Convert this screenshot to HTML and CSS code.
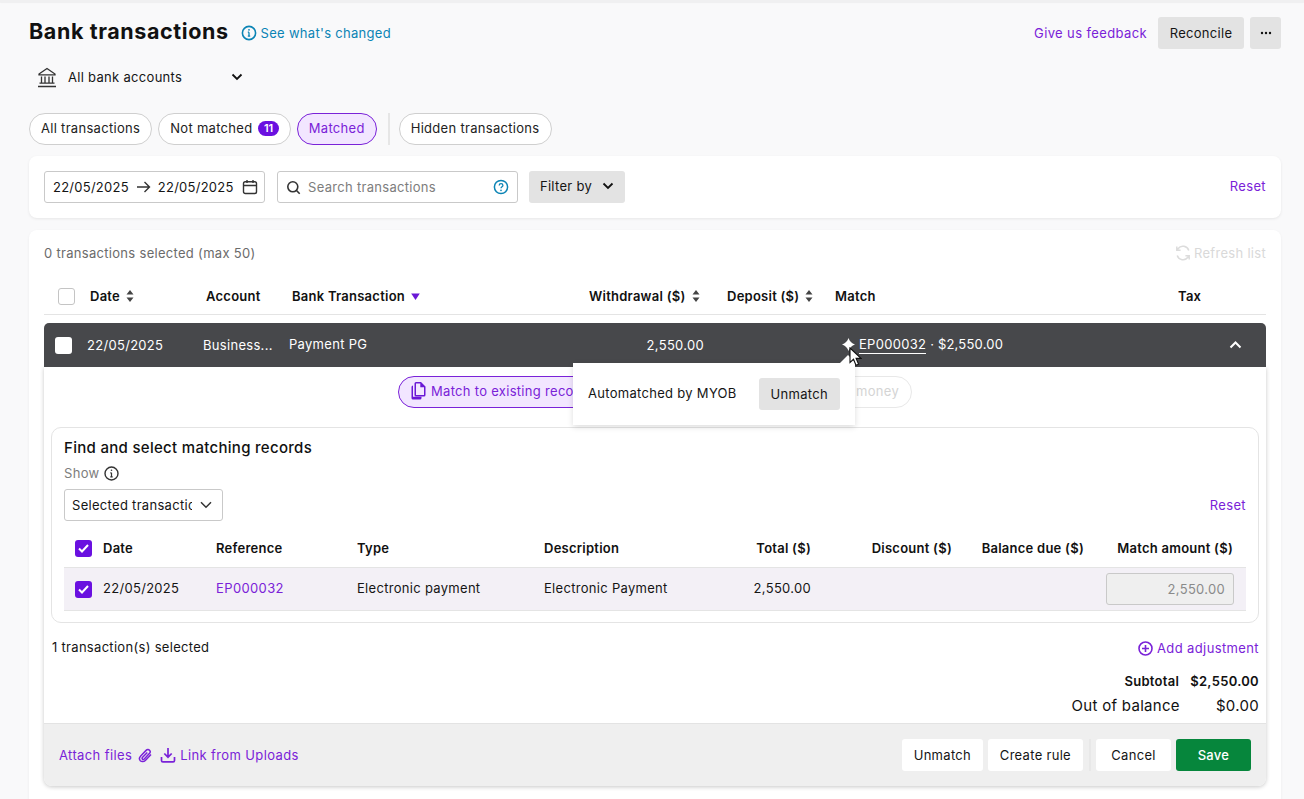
FILE: index.html
```html
<!DOCTYPE html>
<html lang="en">
<head>
<meta charset="utf-8">
<title>Bank transactions</title>
<link rel="stylesheet" href="styles.css">
</head>
<body>
<div class="topline"></div>
<main class="page">
  <header class="head">
    <div class="head-left">
      <h1>Bank transactions</h1>
      <a class="whats-new">
        <svg width="16" height="16" viewBox="0 0 16 16" fill="none" stroke="#0b84b5" stroke-width="1.6"><circle cx="8" cy="8" r="6.6"/><path d="M8 7.2v4M6.8 11.2h2.4M6.8 7.2H8" stroke-width="1.3"/><circle cx="8" cy="4.8" r=".9" fill="#0b84b5" stroke="none"/></svg>
        See what's changed
      </a>
    </div>
    <div class="head-right">
      <a class="link feedback">Give us feedback</a>
      <button class="btn grey reconcile">Reconcile</button>
      <button class="btn grey more">
        <svg width="12" height="4" viewBox="0 0 12 4" fill="#111"><circle cx="2" cy="2" r="1.2"/><circle cx="6" cy="2" r="1.2"/><circle cx="10" cy="2" r="1.2"/></svg>
      </button>
    </div>
  </header>

  <div class="account">
    <svg class="bank" width="22" height="22" viewBox="0 0 22 22" fill="none" stroke="#333" stroke-width="1.3"><path d="M3 8 11 2.5 19 8v.8H3z"/><path d="M5.5 10.5v6M9 10.5v6M13 10.5v6M16.5 10.5v6M3.5 17.2h15"/><path d="M2 20.5h18" stroke-width="1.5"/></svg>
    <span class="account-name">All bank accounts</span>
    <svg class="chev" width="12" height="8" viewBox="0 0 12 8" fill="none" stroke="#111" stroke-width="1.8"><path d="M1.5 1.5 6 6l4.5-4.5"/></svg>
  </div>

  <nav class="tabs">
    <a class="pill">All transactions</a>
    <a class="pill">Not matched <span class="badge">11</span></a>
    <a class="pill active">Matched</a>
    <span class="tab-sep"></span>
    <a class="pill">Hidden transactions</a>
  </nav>

  <section class="filters">
    <div class="field date">
      <span>22/05/2025</span>
      <svg width="15" height="12" viewBox="0 0 15 12" fill="none" stroke="#333" stroke-width="1.4"><path d="M1 6h12.5M8.5 1l5 5-5 5"/></svg>
      <span>22/05/2025</span>
      <svg class="cal" width="16" height="16" viewBox="0 0 16 16" fill="none" stroke="#333" stroke-width="1.4"><rect x="1.5" y="2.7" width="13" height="11.8" rx="1.8"/><path d="M1.5 6.5h13M5 1v3M11 1v3"/></svg>
    </div>
    <div class="field search">
      <svg width="15" height="15" viewBox="0 0 15 15" fill="none" stroke="#333" stroke-width="1.6"><circle cx="6.8" cy="6.8" r="5"/><path d="m10.5 10.5 3.2 3.2"/></svg>
      <span class="placeholder">Search transactions</span>
      <svg class="help" width="16" height="16" viewBox="0 0 16 16" fill="none" stroke="#0b84b5" stroke-width="1.5"><circle cx="8" cy="8" r="6.6"/><path d="M6.2 6.4c0-2.300 3.700-2.300 3.700 0 0 1.400-1.900 1.400-1.900 2.900" stroke-width="1.3"/><circle cx="8" cy="11.400" r=".8" fill="#0b84b5" stroke="none"/></svg>
    </div>
    <button class="btn grey filter-btn">Filter by
      <svg width="12" height="8" viewBox="0 0 12 8" fill="none" stroke="#111" stroke-width="1.8"><path d="M1.500 1.500 6 6l4.500-4.500"/></svg>
    </button>
    <a class="link reset-top">Reset</a>
  </section>

  <section class="list">
    <div class="list-top">
      <span class="muted">0 transactions selected (max 50)</span>
      <span class="refresh">
        <svg width="16" height="16" viewBox="0 0 16 16" fill="none" stroke="#dcdcdc" stroke-width="1.5"><path d="M13.800 5.500A6.200 6.200 0 0 0 3 3.700L1.800 5.300M2.200 10.500A6.200 6.200 0 0 0 13 12.300l1.200-1.600M1.800 1.500v3.800h3.800M14.200 14.500v-3.800h-3.800"/></svg>
        Refresh list
      </span>
    </div>

    <div class="cols">
      <span class="check"></span>
      <span class="th">Date <svg width="8" height="12" viewBox="0 0 8 12" fill="#444"><path d="M4 0l3.500 4.500h-7zM4 12 .5 7.500h7z"/></svg></span>
      <span class="th">Account</span>
      <span class="th">Bank Transaction <svg width="9" height="7" viewBox="0 0 9 7" fill="#6a18d6"><path d="M4.500 7 .2.500h8.600z"/></svg></span>
      <span class="th">Withdrawal ($) <svg width="8" height="12" viewBox="0 0 8 12" fill="#444"><path d="M4 0l3.500 4.500h-7zM4 12 .5 7.500h7z"/></svg></span>
      <span class="th">Deposit ($) <svg width="8" height="12" viewBox="0 0 8 12" fill="#444"><path d="M4 0l3.500 4.500h-7zM4 12 .5 7.500h7z"/></svg></span>
      <span class="th">Match</span>
      <span class="th">Tax</span>
    </div>

    <div class="txn">
      <span class="check white"></span>
      <span>22/05/2025</span>
      <span>Business...</span>
      <span class="lift">Payment PG</span>
      <span class="amount">2,550.00</span>
      <span class="txn-match lift">
        <svg width="13" height="13" viewBox="0 0 13 13" fill="#fff"><path d="M6.500 0C7.500 3 9.800 5.400 13 6.500 9.800 7.600 7.500 10 6.500 13 5.500 10 3.200 7.600 0 6.500 3.200 5.400 5.500 3 6.500 0z"/></svg>
        <span class="match-text"><a class="ep">EP000032</a> · $2,550.00</span>
      </span>
      <svg class="collapse" width="13" height="8" viewBox="0 0 13 8" fill="none" stroke="#fff" stroke-width="2"><path d="M1.500 6.500l5-5 5 5"/></svg>
    </div>

    <div class="detail">
      <div class="modes">
        <a class="pill active mode">
          <svg width="16" height="18" viewBox="0 0 16 18" fill="#6a18d6"><path d="M6 0h5l4.500 4.500V13a1.500 1.500 0 0 1-1.500 1.500H6A1.500 1.500 0 0 1 4.500 13V1.500A1.500 1.500 0 0 1 6 0zm4.300 1.500H6V13h8V5.200h-3.700z"/><path d="M3 3.500v11.200h8.500V16a1.500 1.500 0 0 1-1.500 1.500H3A1.500 1.500 0 0 1 1.500 16V5A1.500 1.500 0 0 1 3 3.500z"/></svg>
          Match to existing records
        </a>
        <a class="pill faded">Transfer money</a>
      </div>

      <div class="panel">
        <h2>Find and select matching records</h2>
        <div class="show">Show
          <svg width="15" height="15" viewBox="0 0 15 15" fill="none" stroke="#333" stroke-width="1.400"><circle cx="7.500" cy="7.500" r="6.500"/><path d="M7.500 6.800v4M6.300 10.800h2.400M6.300 6.800h1.200" stroke-width="1.200"/><circle cx="7.500" cy="4.300" r=".8" fill="#333" stroke="none"/></svg>
        </div>
        <div class="select-row">
          <div class="select">
            <span class="select-text">Selected transactions</span>
            <svg width="12" height="8" viewBox="0 0 12 8" fill="none" stroke="#333" stroke-width="1.500"><path d="M1 1.200 6 6.200l5-5"/></svg>
          </div>
          <a class="link">Reset</a>
        </div>
        <div class="m-row m-head">
          <span class="tick"><svg width="11" height="9" viewBox="0 0 11 9" fill="none" stroke="#fff" stroke-width="2"><path d="M1 4.500 4 7.500 10 1"/></svg></span>
          <span>Date</span><span>Reference</span><span>Type</span><span>Description</span>
          <span class="num">Total ($)</span><span class="num">Discount ($)</span><span class="num">Balance due ($)</span><span class="num">Match amount ($)</span>
        </div>
        <div class="m-row m-body">
          <span class="tick"><svg width="11" height="9" viewBox="0 0 11 9" fill="none" stroke="#fff" stroke-width="2"><path d="M1 4.500 4 7.500 10 1"/></svg></span>
          <span>22/05/2025</span><a class="link">EP000032</a><span>Electronic payment</span><span>Electronic Payment</span>
          <span class="num">2,550.00</span><span></span><span></span>
          <span class="amount-input">2,550.00</span>
        </div>
      </div>

      <div class="summary">
        <div class="sum-top">
          <span>1 transaction(s) selected</span>
          <a class="link add">
            <svg width="15" height="15" viewBox="0 0 15 15" fill="none" stroke="#7a22d8" stroke-width="1.600"><circle cx="7.500" cy="7.500" r="6.500"/><path d="M7.500 4v7M4 7.500h7"/></svg>
            Add adjustment
          </a>
        </div>
        <div class="subtotal"><span>Subtotal</span><span>$2,550.00</span></div>
        <div class="balance"><span>Out of balance</span><span>$0.00</span></div>
      </div>

      <footer class="actions">
        <a class="link foot-link">Attach files
          <svg width="15" height="15" viewBox="0 0 15 15" fill="none" stroke="#7a22d8" stroke-width="1.500"><path d="M13 6.500 7.300 12.400c-1.500 1.500-3.700 1.600-5 .3-1.200-1.300-1-3.300.4-4.800l5.400-5.500c1-1 2.500-1.100 3.400-.2.900.9.800 2.400-.2 3.400L6.300 11c-.5.500-1.300.6-1.800.1-.5-.5-.4-1.300.1-1.800l4.700-4.800"/></svg>
        </a>
        <a class="link foot-link upload">
          <svg width="16" height="16" viewBox="0 0 16 16" fill="none" stroke="#7a22d8" stroke-width="1.700"><path d="M8 1v9M4.300 6.500 8 10.200l3.700-3.700"/><path d="M1.500 10v3.500c0 .8.600 1.400 1.400 1.400h10.200c.8 0 1.400-.6 1.400-1.400V10"/></svg>
          Link from Uploads
        </a>
        <div class="foot-btns">
          <button class="btn plain unmatch">Unmatch</button>
          <button class="btn plain">Create rule</button>
          <span class="foot-sep"></span>
          <button class="btn plain cancel">Cancel</button>
          <button class="btn save">Save</button>
        </div>
      </footer>
    </div>
  </section>
</main>

<div class="popover">
  <span>Automatched by MYOB</span>
  <button class="btn grey">Unmatch</button>
</div>
<svg class="cursor" width="13" height="20" viewBox="0 0 13 20"><path d="M1 1v14.500l3.500-3.200 2.500 6 2.600-1.100-2.500-5.800h4.900z" fill="#fff" stroke="#111" stroke-width="1.100"/></svg>
</body>
</html>
```
FILE: styles.css
```css
* { box-sizing: border-box; }
html, body { margin: 0; height: 799px; overflow: hidden; }
body {
  position: relative;
  background: #f9f9fa;
  color: #151515;
  font: 13px/18px Inter, "Liberation Sans", sans-serif;
  letter-spacing: .3px;
}
a { text-decoration: none; }
button { font: inherit; letter-spacing: inherit; color: inherit; border: 0; cursor: pointer; }
svg { display: block; flex: none; }
.topline { height: 2px; background: #f0f0f1; box-shadow: 0 1px 1px rgba(0,0,0,.04); }
.page { padding: 15px 23px 0 29px; }

.head { display: flex; justify-content: space-between; align-items: center; height: 32px; }
.head-left { display: flex; align-items: center; gap: 12px; }
h1 { margin: -4px 0 0; font-size: 21.5px; line-height: 28px; font-weight: 700; letter-spacing: .6px; color: #111; white-space: nowrap; }
.whats-new { display: flex; align-items: center; gap: 4px; color: #0b84b5; white-space: nowrap; }
.head-right { display: flex; align-items: center; gap: 6px; }
.feedback { margin-right: 5px; }
.link { color: #7a22d8; letter-spacing: .38px; }
.btn { height: 32px; padding: 0 12px 1px; border-radius: 3px; display: inline-flex; align-items: center; justify-content: center; }
.grey { background: #e3e3e3; }
.reconcile { width: 86px; }
.more { width: 31px; padding: 0; }

.account { display: flex; align-items: center; height: 30px; margin: 13px 0 21px 7px; }
.account-name { margin-left: 10px; width: 163px; }

.tabs { display: flex; align-items: center; gap: 6px; height: 32px; margin-bottom: 11px; }
.pill { height: 32px; padding: 0 11px 2px; display: inline-flex; align-items: center; gap: 6px; border: 1px solid #cfcfcf; border-radius: 16px; background: #fff; color: #222; white-space: nowrap; }
.pill.active { background: #f2e6ff; border-color: #7a22d8; color: #7a22d8; }
.badge { background: #6a10e0; color: #fff; font-size: 11px; font-weight: 600; line-height: 14px; height: 15px; padding: 0 5.5px; border-radius: 8px; letter-spacing: 0; }
.tab-sep { width: 2px; height: 32px; background: #e6e6e6; margin: 0 3px 0 5px; }

.filters { display: flex; align-items: center; height: 62px; padding: 0 15px; background: #fff; border-radius: 8px; box-shadow: 0 1px 3px rgba(0,0,0,.08); }
.field { height: 32px; display: flex; align-items: center; background: #fff; border: 1px solid #c9c9c9; border-radius: 3px; }
.date { width: 221px; padding: 0 6px 0 8px; gap: 7px; letter-spacing: .25px; }
.cal { margin-left: auto; }
.search { width: 241px; margin-left: 12px; padding: 0 8px; gap: 7px; }
.placeholder { color: #7d7d7d; flex: 1; }
.filter-btn { width: 96px; margin-left: 11px; gap: 10px; padding: 0 0 2px; }
.reset-top { margin: 0 0 2px auto; }

.list { margin-top: 12px; padding: 0 15px; height: 600px; background: #fff; border-radius: 8px 8px 0 0; box-shadow: 0 1px 3px rgba(0,0,0,.06); }
.list-top { display: flex; justify-content: space-between; align-items: center; padding-bottom: 2px; height: 48px; }
.muted { color: #6b6b6b; }
.refresh { display: flex; align-items: center; gap: 3px; color: #d9d9d9; }

.cols { display: grid; align-items: center; grid-template-columns: 32px 116px 86px 297px 138px 108px 343px 1fr; height: 37px; padding-left: 14px; border-bottom: 1px solid #e4e4e4; }
.th { display: flex; align-items: center; gap: 6px; font-weight: 600; color: #111; letter-spacing: .25px; }
.check { width: 17px; height: 17px; border: 1px solid #c4c4c4; border-radius: 3px; background: #fff; }
.txn { position: relative; display: grid; align-items: center; grid-template-columns: 32px 116px 86px 415px 1fr; height: 44px; margin-top: 8px; padding-left: 11px; background: #47484b; color: #fff; border-radius: 5px 5px 0 0; }
.check.white { border: 0; }
.lift { margin-top: -2px; }
.amount { justify-self: end; grid-column: 4; grid-row: 1; }
.txn > .lift:nth-child(4) { grid-column: 4; grid-row: 1; }
.txn-match { grid-column: 5; display: flex; align-items: center; gap: 4px; margin-left: 138px; }
.match-text { letter-spacing: .2px; }
.ep { color: #fff; border-bottom: 1px solid #fff; padding-bottom: 1px; letter-spacing: .3px; }
.collapse { position: absolute; right: 24px; top: 18px; }

.detail { display: flex; flex-direction: column; height: 419px; background: #fff; border-radius: 0 0 8px 8px; box-shadow: 0 1px 4px rgba(0,0,0,.22); }
.modes { display: flex; justify-content: space-between; width: 514px; margin: 9px 0 0 354px; }
.mode { gap: 5px; padding: 0 13px 2px 11px; color: #7a22d8; }
.faded { color: #d4d4d4; border-color: #e8e8e8; padding: 0 12px 2px; }

.panel { margin: 19px 7px 0; height: 196px; padding: 10px 12px 0; border: 1px solid #e4e4e4; border-radius: 10px; }
h2 { margin: 0; font-size: 15px; line-height: 20px; font-weight: 500; color: #111; }
.show { display: flex; align-items: center; gap: 5px; margin-top: 6px; color: #7d7d7d; }
.select-row { display: flex; justify-content: space-between; align-items: center; margin-top: 7px; }
.select { display: flex; align-items: center; width: 159px; height: 32px; padding: 0 8px 0 7px; gap: 8px; border: 1px solid #c9c9c9; border-radius: 3px; }
.select-text { width: 120px; overflow: hidden; white-space: nowrap; }
.m-row { display: grid; align-items: center; grid-template-columns: 28px 113px 141px 187px 150px 117px 141px 132px 149px; padding: 0 12px 0 11px; }
.m-head { height: 46px; padding-top: 8px; font-weight: 600; color: #111; letter-spacing: .25px; }
.m-body { height: 44px; padding-bottom: 2px; background: #f3f0f6; border-top: 1px solid #e4e4e4; border-bottom: 1px solid #e4e4e4; }
.m-body .tick, .m-body .amount-input { margin-bottom: -2px; }
.num { text-align: right; white-space: nowrap; }
.tick { width: 17px; height: 17px; border-radius: 3px; background: #6a10e0; display: flex; align-items: center; justify-content: center; }
.amount-input { justify-self: end; width: 128px; height: 32px; line-height: 30px; margin-right: -1px; padding-right: 8px; text-align: right; color: #8a8a8a; background: #efefef; border: 1px solid #c9c9c9; border-radius: 3px; }

.summary { flex: 1; padding: 15px 7px 0 8px; }
.sum-top { display: flex; justify-content: space-between; align-items: center; height: 18px; }
.add { display: flex; align-items: center; gap: 4px; margin-top: 2px; }
.subtotal { display: flex; justify-content: flex-end; gap: 11px; margin-top: 16px; font-weight: 600; color: #111; }
.balance { display: flex; justify-content: flex-end; gap: 36px; margin-top: 5px; font-size: 15px; line-height: 22px; color: #111; }

.actions { display: flex; align-items: center; height: 63px; padding: 0 15px; background: #efefef; border-top: 1px solid #e3e3e3; border-radius: 0 0 8px 8px; }
.foot-link { display: flex; align-items: center; gap: 6px; }
.upload { margin-left: 7px; gap: 4px; }
.foot-btns { margin-left: auto; display: flex; align-items: center; gap: 5px; }
.plain { background: #fff; }
.unmatch { width: 81px; }
.cancel { width: 75px; }
.foot-sep { width: 2px; height: 32px; background: #e8e8e8; margin-left: 1px; }
.save { background: #06863c; color: #fff; font-weight: 500; width: 75px; }

.popover { position: absolute; left: 573px; top: 363px; width: 282px; height: 62px; padding: 15px 15px 0; display: flex; align-items: flex-start; justify-content: space-between; background: #fff; box-shadow: 0 2px 6px rgba(0,0,0,.14); }
.popover span { line-height: 31px; }
.popover::before { content: ""; position: absolute; top: -8px; left: 267px; width: 16px; height: 8px; background: #fff; clip-path: polygon(50% 0, 100% 100%, 0 100%); }
.cursor { position: absolute; left: 849px; top: 347px; }
```
